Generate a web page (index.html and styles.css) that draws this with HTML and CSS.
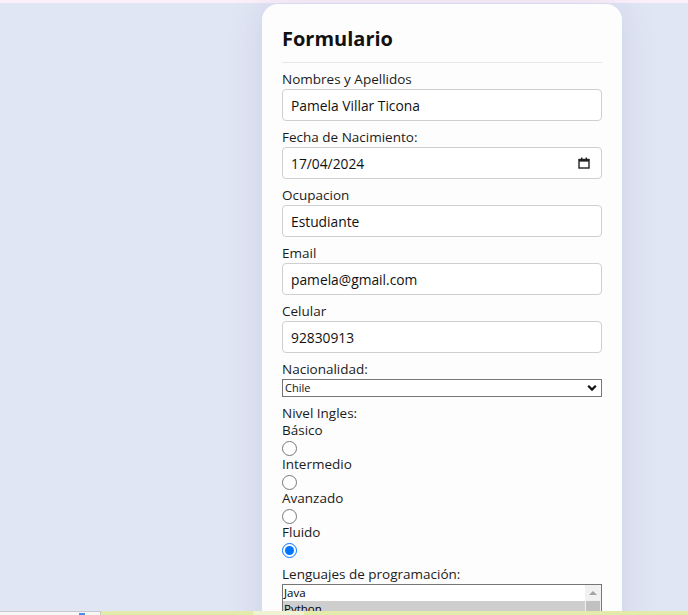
FILE: index.html
```html
<!DOCTYPE html>
<html lang="es">
<head>
<meta charset="utf-8">
<title>Formulario</title>
<link rel="stylesheet" href="styles.css">
</head>
<body>
<div class="topbar"></div>
<main class="card">
  <h1 class="title">Formulario</h1>
  <hr class="divider">
  <form class="form">
    <label class="lbl" for="nombre">Nombres y Apellidos</label>
    <input class="txt" id="nombre" type="text" value="Pamela Villar Ticona">

    <label class="lbl" for="fecha">Fecha de Nacimiento:</label>
    <div class="date-wrap">
      <input class="txt" id="fecha" type="text" value="17/04/2024">
      <svg class="cal" width="12" height="12" viewBox="0 0 12 12" aria-hidden="true">
        <rect x="1" y="2.5" width="10" height="8.5" fill="none" stroke="#222" stroke-width="1.4"/>
        <rect x="1" y="2" width="10" height="2.6" fill="#222"/>
        <rect x="3" y="0.5" width="1.4" height="2" fill="#222"/>
        <rect x="7.6" y="0.5" width="1.4" height="2" fill="#222"/>
      </svg>
    </div>

    <label class="lbl" for="ocupacion">Ocupacion</label>
    <input class="txt" id="ocupacion" type="text" value="Estudiante">

    <label class="lbl" for="email">Email</label>
    <input class="txt" id="email" type="text" value="pamela@gmail.com">

    <label class="lbl" for="celular">Celular</label>
    <input class="txt" id="celular" type="text" value="92830913">

    <label class="lbl" for="nac">Nacionalidad:</label>
    <select class="sel" id="nac">
      <option>Chile</option>
      <option>Bolivia</option>
      <option>Perú</option>
    </select>

    <div class="lbl lbl-group">Nivel Ingles:</div>
    <label class="lbl lbl-radio" for="r1">Básico</label>
    <input class="radio" id="r1" type="radio" name="nivel">
    <label class="lbl lbl-radio" for="r2">Intermedio</label>
    <input class="radio" id="r2" type="radio" name="nivel">
    <label class="lbl lbl-radio" for="r3">Avanzado</label>
    <input class="radio" id="r3" type="radio" name="nivel">
    <label class="lbl lbl-radio" for="r4">Fluido</label>
    <input class="radio" id="r4" type="radio" name="nivel" checked>

    <div class="lbl lbl-group">Lenguajes de programación:</div>
    <div class="listbox" role="listbox" aria-multiselectable="true">
      <div class="options">
        <div class="opt" role="option">Java</div>
        <div class="opt opt-sel" role="option" aria-selected="true">Python</div>
        <div class="opt" role="option">JavaScript</div>
        <div class="opt" role="option">C++</div>
      </div>
      <div class="scrollbar">
        <div class="arrow-up"></div>
        <div class="thumb"></div>
      </div>
    </div>
  </form>
</main>
<div class="bottombar">
  <div class="seg seg-white"><span class="seg-dot"></span></div>
  <div class="seg seg-green1"></div>
  <div class="seg seg-light"></div>
  <div class="seg seg-green2"></div>
</div>
</body>
</html>
```
FILE: styles.css
```css
html, body {
  margin: 0;
  overflow: hidden;
}
body {
  background: #e1e6f4;
  font-family: "Open Sans", "Noto Sans", sans-serif;
  color: #1b1b1b;
  height: 615px;
}
.topbar {
  height: 3px;
  background: #fcf0fb;
}
.card {
  display: block;
  width: 320px;
  margin: 1px 0 0 262px;
  padding: 22px 20px 40px;
  background: #fdfdfd;
  border-radius: 16px;
  box-shadow: 0 0 36px rgba(60, 70, 130, 0.13);
}
.title {
  margin: 0;
  font-size: 20px;
  line-height: 26px;
  font-weight: 700;
  color: #111;
}
.divider {
  margin: 10px 0 7px;
  border: 0;
  border-top: 1px solid #e6e6e6;
  height: 0;
}
.form {
  display: flex;
  flex-direction: column;
  align-items: flex-start;
}
.lbl {
  display: block;
  font-size: 13.5px;
  line-height: 18px;
  color: #1b1b1b;
}
.txt {
  box-sizing: border-box;
  width: 320px;
  height: 32px;
  margin: 1px 0 7px;
  padding: 0 8px;
  border: 1px solid #cfcfcf;
  border-radius: 4px;
  background: #fff;
  font-family: inherit;
  font-size: 13.8px;
  color: #111;
  outline: none;
}
.date-wrap {
  position: relative;
  width: 320px;
}
.date-wrap .txt {
  display: block;
}
.cal {
  position: absolute;
  right: 12px;
  top: 11px;
}
.sel {
  box-sizing: border-box;
  width: 320px;
  height: 18px;
  margin: 1px 0 8px;
  padding: 0 0 0 2px;
  border: 1px solid #767676;
  border-radius: 0;
  background: #fff url("data:image/svg+xml,%3Csvg xmlns='http://www.w3.org/2000/svg' width='10' height='8' viewBox='0 0 10 8'%3E%3Cpath d='M1.2 1.8 5 5.6 8.8 1.8' fill='none' stroke='%23111' stroke-width='2.2'/%3E%3C/svg%3E") no-repeat right 4px center;
  -webkit-appearance: none;
  appearance: none;
  font-family: inherit;
  font-size: 11px;
  line-height: 16px;
  color: #111;
}
.lbl-radio {
  line-height: 17px;
}
.lbl-group {
  line-height: 17px;
}
.radio {
  display: block;
  width: 15px;
  height: 15px;
  margin: 2px 0 0 0;
}
.lbl-group + .listbox {
  margin-top: 1px;
}
.radio + .lbl-group {
  margin-top: 8px;
}
.listbox {
  box-sizing: border-box;
  width: 320px;
  height: 70px;
  display: flex;
  border: 1px solid #767676;
  background: #fff;
  overflow: hidden;
}
.options {
  flex: 1;
}
.opt {
  height: 16px;
  line-height: 16px;
  padding-left: 1px;
  font-size: 11.5px;
  color: #000;
}
.opt-sel {
  background: #cecece;
}
.scrollbar {
  width: 16px;
  background: #f1f1f1;
  display: flex;
  flex-direction: column;
  align-items: center;
}
.arrow-up {
  width: 0;
  height: 0;
  margin-top: 6px;
  border-left: 4px solid transparent;
  border-right: 4px solid transparent;
  border-bottom: 4px solid #a3a3a3;
}
.thumb {
  width: 14px;
  height: 40px;
  margin-top: 6px;
  background: #c1c1c1;
}
.bottombar {
  position: fixed;
  left: 0;
  right: 0;
  bottom: 0;
  height: 4px;
  display: flex;
}
.seg {
  height: 100%;
}
.seg-white {
  position: relative;
  width: 101px;
  box-sizing: border-box;
  background: #f7f7f7;
  border-top: 1px solid #c8c8c8;
  border-right: 1px solid #c8c8c8;
}
.seg-dot {
  position: absolute;
  left: 79px;
  top: 1px;
  width: 6px;
  height: 2px;
  background: #4a8cf0;
}
.seg-green1 {
  width: 152px;
  background: #e4eaa9;
}
.seg-light {
  width: 51px;
  background: #eff3d2;
}
.seg-green2 {
  flex: 1;
  background: #e4eaa9;
}
```
